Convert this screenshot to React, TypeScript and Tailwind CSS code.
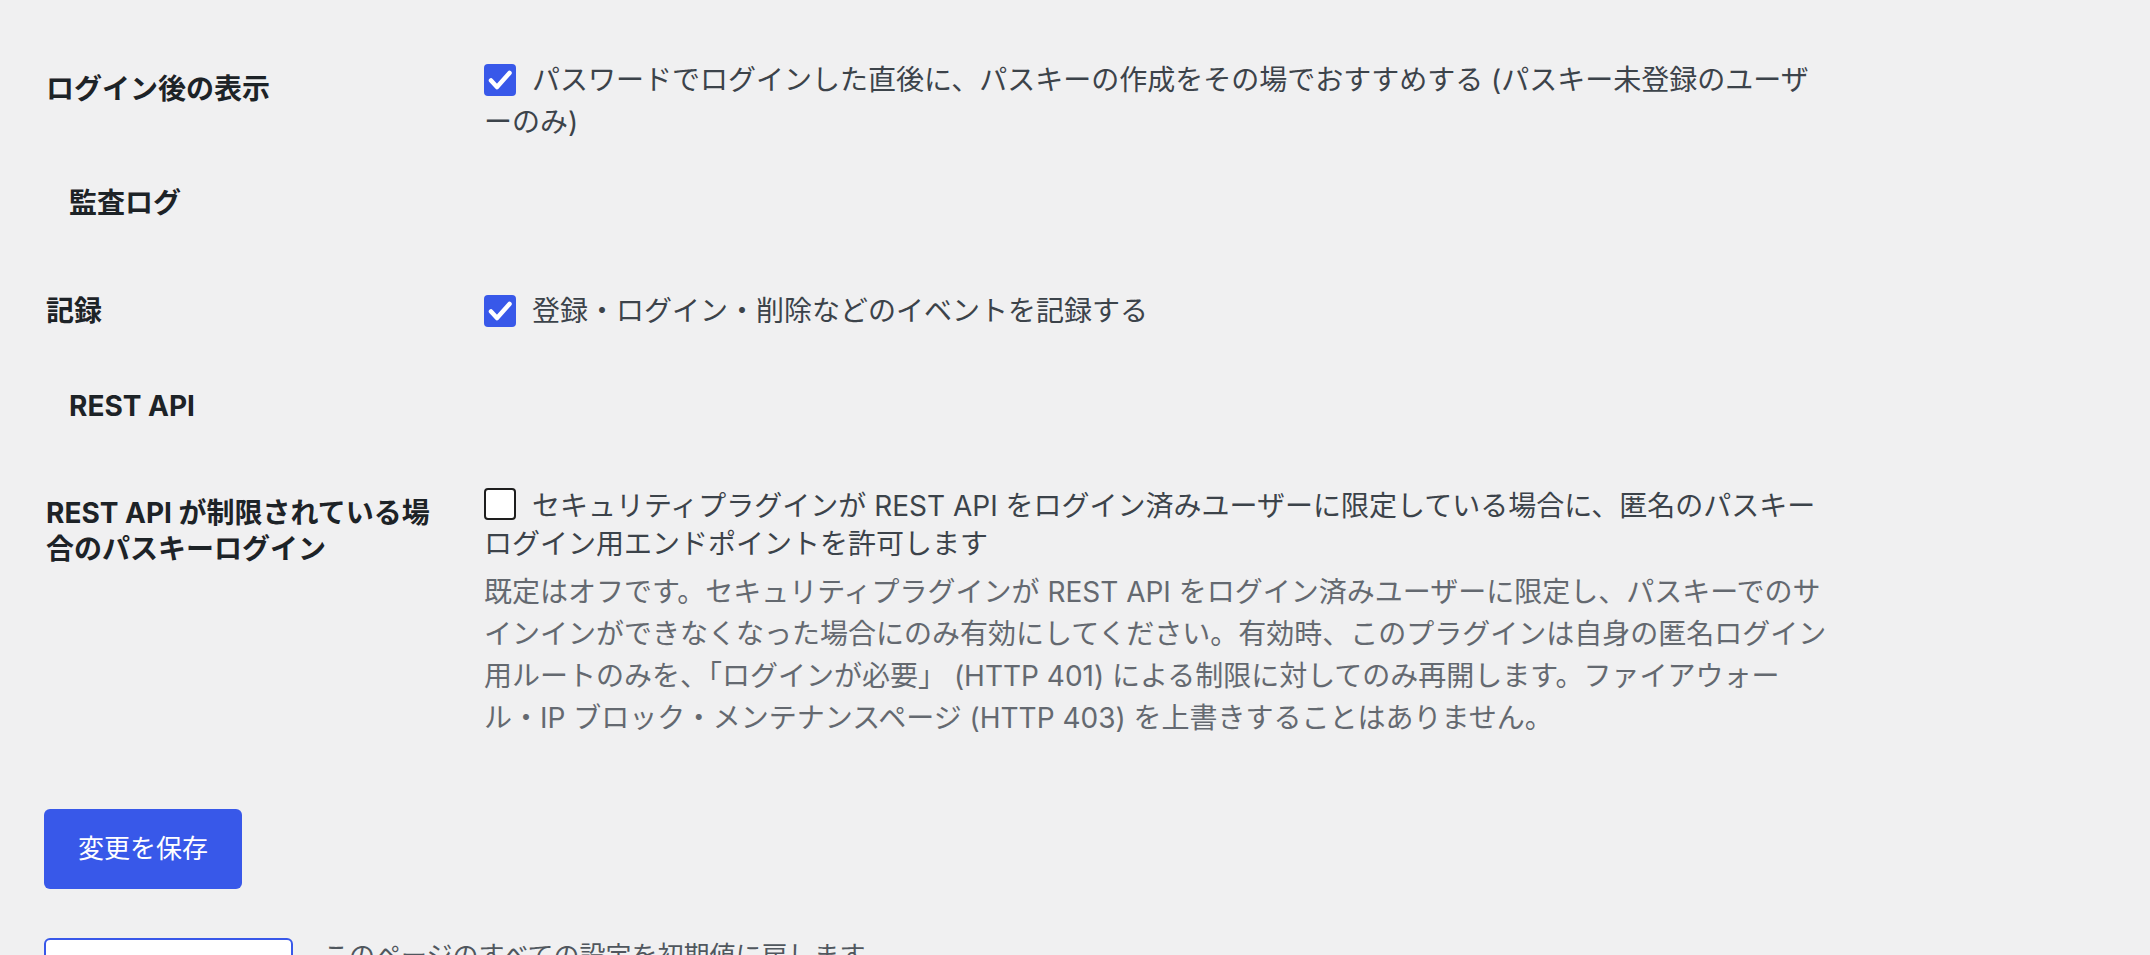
import React from "react";

const font = "font-['Inter','Noto_Sans_CJK_JP',sans-serif]";

function Checkbox({ checked }: { checked: boolean }) {
  if (!checked) {
    return (
      <span className="inline-block w-[32px] h-[32px] shrink-0 rounded-[4px] border-2 border-[#1e1e1e] bg-white" />
    );
  }
  return (
    <span className="inline-flex w-[32px] h-[32px] shrink-0 rounded-[4px] bg-[#3858e9] items-center justify-center">
      <svg width="32" height="32" viewBox="0 0 32 32" fill="none">
        <path
          d="M7 16.5 L13 23 L25.5 9"
          stroke="#ffffff"
          strokeWidth="4.5"
          strokeLinecap="round"
          strokeLinejoin="round"
        />
      </svg>
    </span>
  );
}

function Label({ children, className = "" }: { children: React.ReactNode; className?: string }) {
  return (
    <div className={`w-[438px] shrink-0 text-[28px] font-bold leading-[36px] text-[#1d2327] ${className}`}>
      {children}
    </div>
  );
}

export default function App() {
  return (
    <div className={`h-[955px] overflow-hidden bg-[#f0f0f1] ${font}`}>
      <div className="pl-[46px] pt-[59px]">
        {/* ログイン後の表示 */}
        <div className="flex">
          <Label className="pt-[12px]">ログイン後の表示</Label>
          <div className="text-[28px] text-[#3c434a] leading-[42px]">
            <div className="flex items-center h-[42px] whitespace-nowrap">
              <Checkbox checked />
              <span className="ml-[16px]">
                パスワードでログインした直後に、パスキーの作成をその場でおすすめする (パスキー未登録のユーザ
              </span>
            </div>
            <div className="h-[42px] whitespace-nowrap">ーのみ)</div>
          </div>
        </div>

        {/* 監査ログ */}
        <h2 className="mt-[42px] pl-[23px] text-[28px] font-bold leading-[36px] text-[#1d2327]">監査ログ</h2>

        <div className="flex mt-[69px]">
          <Label className="pt-[3px]">記録</Label>
          <div className="flex items-center h-[42px] text-[28px] text-[#3c434a] whitespace-nowrap">
            <Checkbox checked />
            <span className="ml-[16px]">登録・ログイン・削除などのイベントを記録する</span>
          </div>
        </div>

        {/* REST API */}
        <h2 className="mt-[56px] pl-[23px] text-[28px] font-bold leading-[36px] text-[#1d2327]">REST API</h2>

        <div className="flex mt-[63px]">
          <Label className="pt-[8px]">
            REST API が制限されている場
            <br />
            合のパスキーログイン
          </Label>
          <div className="text-[28px] whitespace-nowrap">
            <div className="text-[#3c434a] leading-[38px]">
              <div className="flex items-center h-[38px]">
                <span className="mb-[5px] flex">
                  <Checkbox checked={false} />
                </span>
                <span className="ml-[16px]">
                  セキュリティプラグインが REST API をログイン済みユーザーに限定している場合に、匿名のパスキー
                </span>
              </div>
              <div className="h-[38px]">ログイン用エンドポイントを許可します</div>
            </div>
            <p className="mt-[8px] text-[#646970] leading-[42px]">
              既定はオフです。セキュリティプラグインが REST API をログイン済みユーザーに限定し、パスキーでのサ
              <br />
              インインができなくなった場合にのみ有効にしてください。有効時、このプラグインは自身の匿名ログイン
              <br />
              用ルートのみを、「ログインが必要」 (HTTP 401) による制限に対してのみ再開します。ファイアウォー
              <br />
              ル・IP ブロック・メンテナンスページ (HTTP 403) を上書きすることはありません。
            </p>
          </div>
        </div>

        {/* buttons */}
        <div className="-ml-[2px] mt-[70px]">
          <button className="w-[198px] h-[80px] rounded-[6px] bg-[#3858e9] text-white text-[26px] leading-none">
            変更を保存
          </button>
          <div className="flex items-start mt-[49px]">
            <button className="w-[249px] h-[80px] rounded-[6px] border-2 border-[#3858e9] bg-white" />
            <span className="ml-[30px] text-[26px] leading-[36px] text-[#50575e]">
              このページのすべての設定を初期値に戻します
            </span>
          </div>
        </div>
      </div>
    </div>
  );
}
